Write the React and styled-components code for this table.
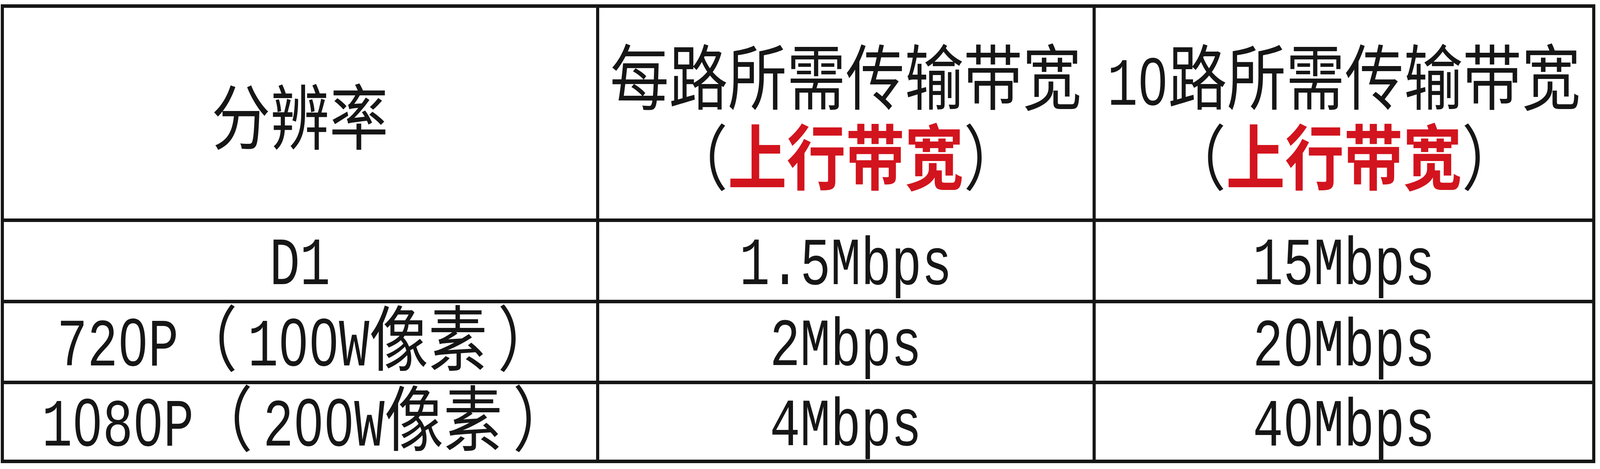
import React, { useEffect, useState } from "react";
import styled, { createGlobalStyle } from "styled-components";

/* Measured on a 4615 x 1200 frame: horizontal sizes are fractions of the
   viewport width, vertical sizes fractions of the viewport height. */
const v = (n) => `${((n * 100) / 4615).toFixed(5)}vw`;
const h = (n) => `${((n * 100) / 1200).toFixed(5)}vh`;

const GlobalStyle = createGlobalStyle`
  html, body {
    margin: 0;
    padding: 0;
    background: #ffffff;
    overflow: hidden;
  }
  body {
    font-family: "Noto Sans CJK SC", "Noto Sans", sans-serif;
  }
`;

const Page = styled.div`
  padding: ${h(11)} 0 0 ${v(2)};
`;

const Table = styled.div`
  display: grid;
  grid-template-columns: ${v(1708)} ${v(1423)} ${v(1433)};
  grid-template-rows: ${h(539)} ${h(199)} ${h(198)} ${h(193)};
  row-gap: ${h(9)};
  column-gap: ${v(9)};
  padding: ${h(9)} ${v(9)};
  width: max-content;
  background: #161616;
`;

const Row = styled.div`
  display: contents;
`;

const Cell = styled.div`
  display: flex;
  flex-direction: column;
  align-items: center;
  justify-content: center;
  box-sizing: border-box;
  padding-bottom: ${(p) => (p.$head ? "0" : h(22))};
  background: #ffffff;
  color: #161616;
  font-family: "Noto Sans CJK SC", sans-serif;
  font-size: ${v(170)};
  font-weight: 400;
  line-height: ${(p) => (p.$head ? h(205) : h(150))};
  white-space: nowrap;
  overflow: visible;
`;

/* Glyphs in the reference are drawn a little taller than they are wide. */
const Line = styled.div`
  display: block;
  transform: scaleY(calc(var(--sy, 1) * 1.07));
  transform-origin: 50% 50%;
`;

const Latin = styled.span`
  display: inline-block;
  font-family: "Liberation Mono", "DejaVu Sans Mono", monospace;
  font-size: ${v(146)};
  line-height: 0.9;
  transform: scaleY(1.1);
  transform-origin: 50% 0.7165em;
`;

/* A plain (undotted) zero in a monospace-wide slot. */
const Zero = styled.span`
  display: inline-block;
  width: 0.6em;
  text-align: center;
  font-family: "Liberation Sans", "Noto Sans", sans-serif;
  font-weight: 400;
`;

const OpenParen = styled.span`
  margin-right: ${v(30)};
`;

const CloseParen = styled.span`
  margin-left: ${v(30)};
  margin-right: ${v(-40)};
`;

const Red = styled.span`
  color: #d2141e;
  font-weight: 700;
`;

const Mono = ({ children }) => (
  <Latin>
    {String(children)
      .split("")
      .map((c, i) => (c === "0" ? <Zero key={i}>0</Zero> : c))}
  </Latin>
);

const Resolution = ({ mode, pixels }) => (
  <>
    <Mono>{mode}</Mono>
    <OpenParen>（</OpenParen>
    <Mono>{pixels}</Mono>像素<CloseParen>）</CloseParen>
  </>
);

const rows = [
  { res: <Mono>D1</Mono>, one: "1.5Mbps", ten: "15Mbps" },
  { res: <Resolution mode="720P" pixels="100W" />, one: "2Mbps", ten: "20Mbps" },
  { res: <Resolution mode="1080P" pixels="200W" />, one: "4Mbps", ten: "40Mbps" },
];

/* Font sizes follow the width; this stretches glyphs so their height
   follows the frame's height the way the rows do. */
const frameRatio = () => {
  if (typeof window === "undefined") return 1;
  const r = window.innerHeight / 1200 / (window.innerWidth / 4615);
  return Number.isFinite(r) && r > 0.5 && r < 2 ? r : 1;
};

export default function App() {
  const [sy, setSy] = useState(frameRatio);

  useEffect(() => {
    const onResize = () => setSy(frameRatio());
    window.addEventListener("resize", onResize);
    return () => window.removeEventListener("resize", onResize);
  }, []);

  return (
    <>
      <GlobalStyle />
      <Page>
        <Table role="table" style={{ "--sy": sy }}>
          <Row role="row">
            <Cell $head role="columnheader">
              <Line>分辨率</Line>
            </Cell>
            <Cell $head role="columnheader">
              <Line>每路所需传输带宽</Line>
              <Line>
                （<Red>上行带宽</Red>）
              </Line>
            </Cell>
            <Cell $head role="columnheader">
              <Line>
                <Mono>10</Mono>路所需传输带宽
              </Line>
              <Line>
                （<Red>上行带宽</Red>）
              </Line>
            </Cell>
          </Row>
          {rows.map((r, i) => (
            <Row role="row" key={i}>
              <Cell role="cell">
                <Line>{r.res}</Line>
              </Cell>
              <Cell role="cell">
                <Line>
                  <Mono>{r.one}</Mono>
                </Line>
              </Cell>
              <Cell role="cell">
                <Line>
                  <Mono>{r.ten}</Mono>
                </Line>
              </Cell>
            </Row>
          ))}
        </Table>
      </Page>
    </>
  );
}
